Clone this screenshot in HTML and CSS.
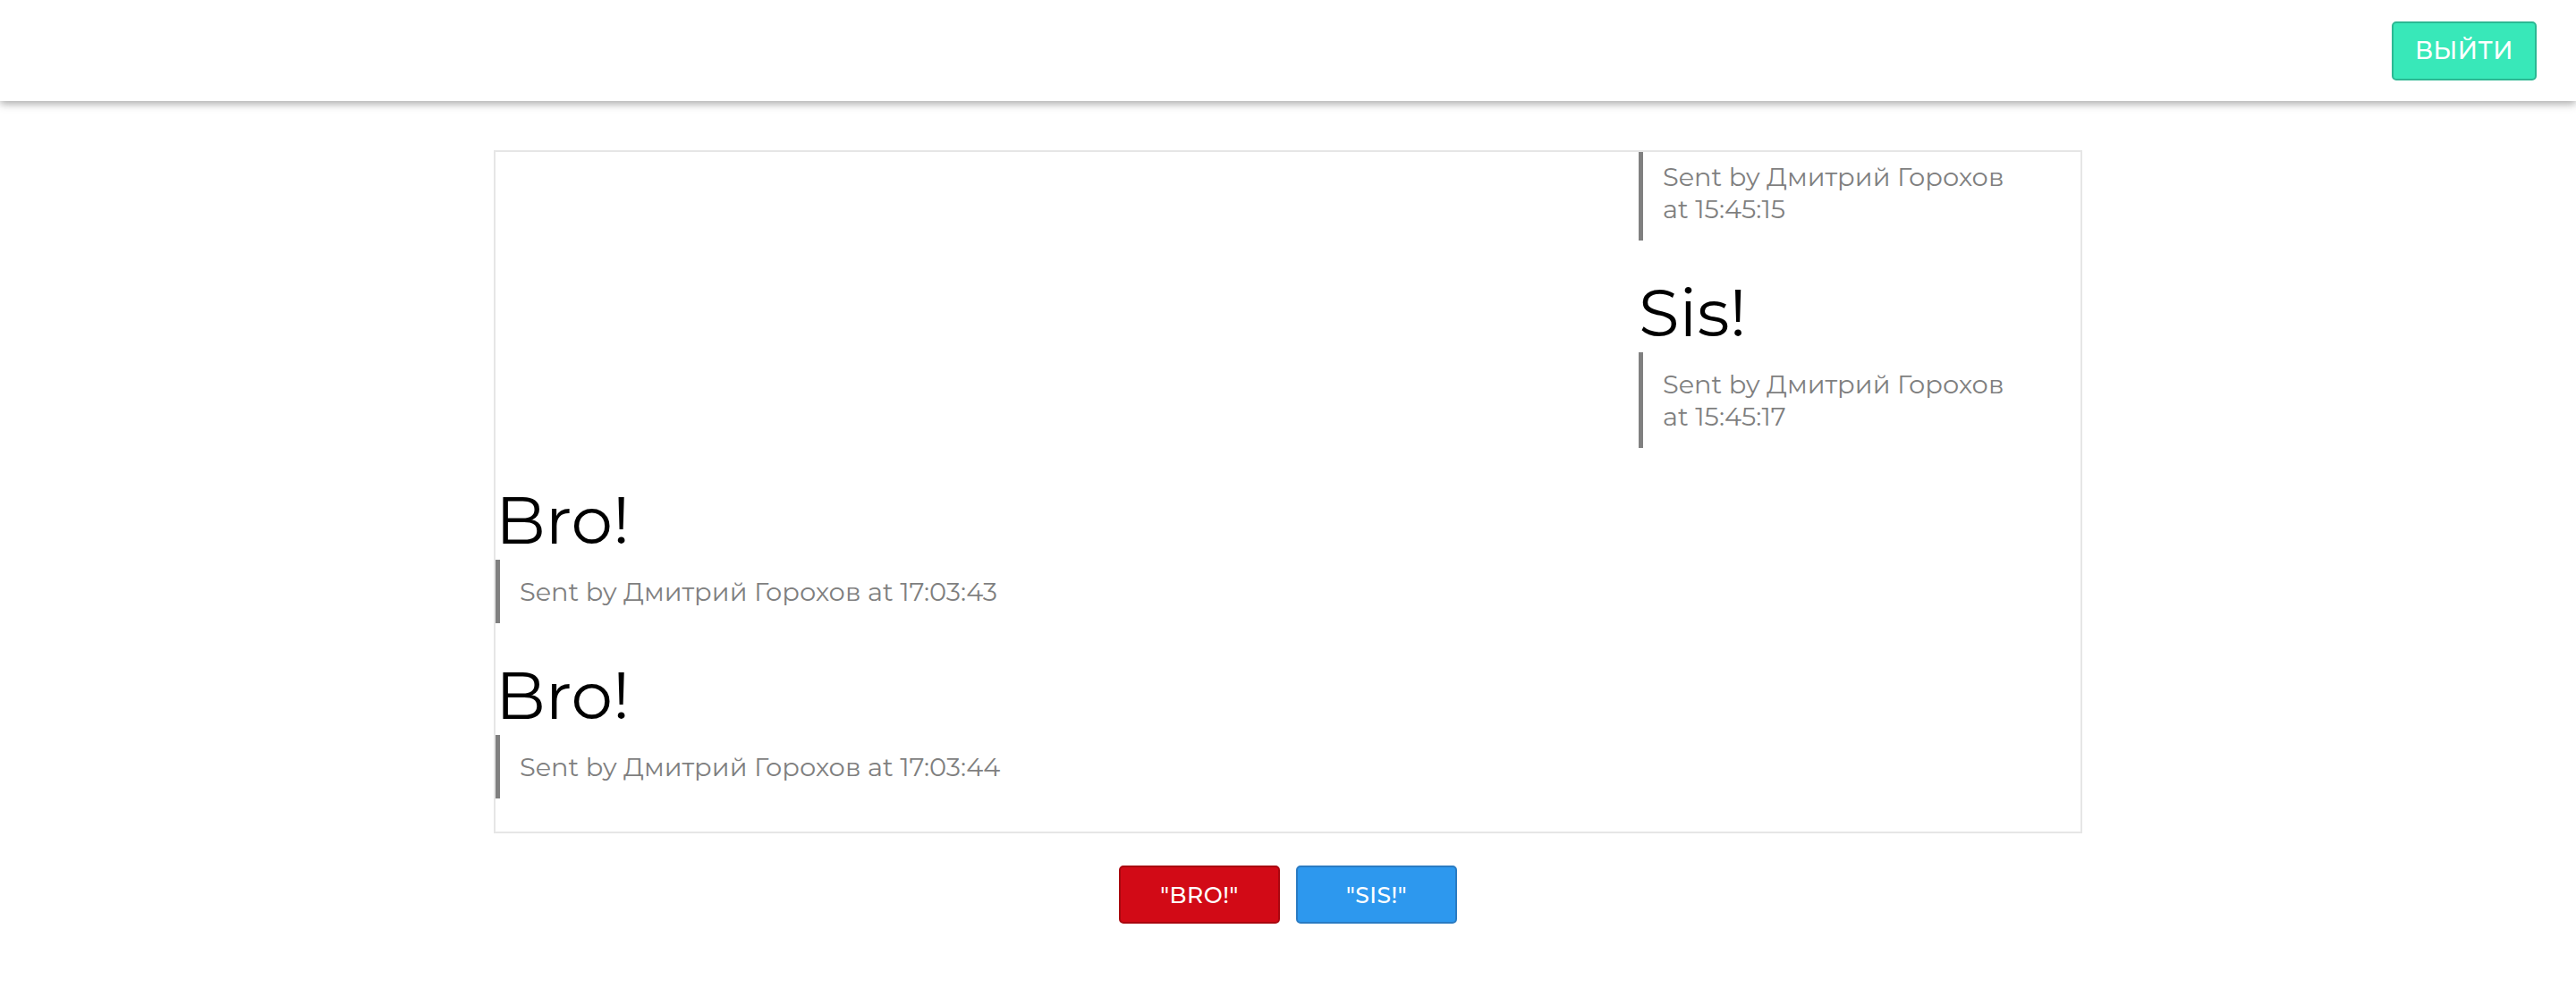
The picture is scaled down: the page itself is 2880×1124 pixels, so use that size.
FILE: index.html
```html
<!DOCTYPE html>
<html lang="ru">
<head>
<meta charset="utf-8">
<title>Chat</title>
<link rel="stylesheet" href="styles.css">
</head>
<body>
<header class="topbar">
  <button class="btn btn-logout">Выйти</button>
</header>
<main class="page">
  <section class="chat">
    <div class="msg msg-right">
      <blockquote class="msg-meta">Sent by Дмитрий Горохов at 15:45:15</blockquote>
    </div>
    <div class="msg msg-right">
      <div class="msg-text">Sis!</div>
      <blockquote class="msg-meta">Sent by Дмитрий Горохов at 15:45:17</blockquote>
    </div>
    <div class="msg msg-left">
      <div class="msg-text">Bro!</div>
      <blockquote class="msg-meta">Sent by Дмитрий Горохов at 17:03:43</blockquote>
    </div>
    <div class="msg msg-left">
      <div class="msg-text">Bro!</div>
      <blockquote class="msg-meta">Sent by Дмитрий Горохов at 17:03:44</blockquote>
    </div>
  </section>
  <div class="actions">
    <button class="btn btn-bro">"Bro!"</button>
    <button class="btn btn-sis">"Sis!"</button>
  </div>
</main>
</body>
</html>
```
FILE: styles.css
```css
html, body {
  margin: 0;
  padding: 0;
  background: #ffffff;
}

body {
  font-family: Montserrat, "Open Sans", "Noto Sans", sans-serif;
  font-size: 28.8px;
  color: #000;
}

.topbar {
  height: 113px;
  display: flex;
  justify-content: flex-end;
  align-items: center;
  padding: 0 44px 0 0;
  background: #fff;
  box-shadow: 0 3px 9px rgba(0, 0, 0, 0.35);
  position: relative;
  z-index: 1;
}

.btn {
  font-family: Montserrat, "Open Sans", "Noto Sans", sans-serif;
  font-weight: 500;
  text-transform: uppercase;
  color: #fff;
  border-radius: 5px;
  border: 2px solid transparent;
  cursor: pointer;
  display: flex;
  align-items: center;
  justify-content: center;
  padding: 0;
}

.btn-logout {
  width: 162px;
  height: 66px;
  background: #38e8b9;
  border-color: #2cb893;
  font-size: 27px;
  letter-spacing: 0.5px;
}

.page {
  display: flex;
  flex-direction: column;
  align-items: center;
  padding-top: 55px;
}

.chat {
  box-sizing: border-box;
  width: 1776px;
  height: 764px;
  border: 2px solid #e6e6e6;
  display: flex;
  flex-direction: column;
  justify-content: flex-end;
  overflow: hidden;
}

.msg {
  flex-shrink: 0;
  margin-bottom: 37px;
}

.msg-left {
  align-self: flex-start;
}

.msg-right {
  align-self: flex-end;
  width: 494px;
}

.msg-text {
  font-size: 74px;
  line-height: 88px;
  color: #000;
}

.msg-meta {
  margin: 0;
  border-left: 5px solid #808080;
  padding: 18px 0 17px 22px;
  font-size: 28.8px;
  line-height: 36px;
  color: #7f7f7f;
}

.msg-right .msg-meta {
  padding-right: 60px;
}

.actions {
  display: flex;
  gap: 18px;
  margin-top: 36px;
}

.btn-bro,
.btn-sis {
  width: 180px;
  height: 65px;
  font-size: 25px;
  letter-spacing: 0.5px;
}

.btn-bro {
  background: #d20a16;
  border-color: #a9070f;
}

.btn-sis {
  background: #2d98ee;
  border-color: #2a7bc2;
}
```
